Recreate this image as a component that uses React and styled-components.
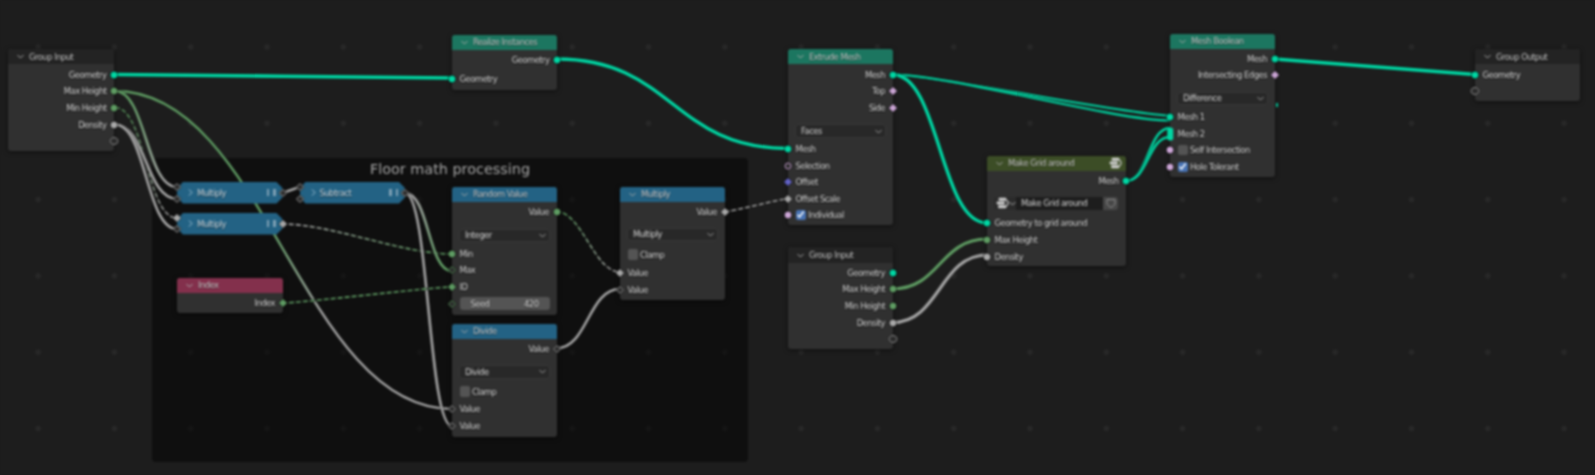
import styled, { createGlobalStyle } from "styled-components";

const GlobalStyle = createGlobalStyle`
  html, body {
    margin: 0;
    background: #1d1d1d;
  }
`;

const COLORS = {
  geo: "#00d6a3",
  int: "#5f9c63",
  float: "#a8a8a8",
  bool: "#cca6d6",
  vec: "#6363c7",
};

const WIRE_GREY = "#a4a4a4";

const Canvas = styled.div`
  position: relative;
  width: 1595px;
  height: 475px;
  overflow: hidden;
  font-family: "DejaVu Sans", sans-serif;
  font-size: 8.4px;
  letter-spacing: -0.5px;
  color: #d2d2d2;
  background-color: #1d1d1d;
  background-image: radial-gradient(circle at center, #282828 2.4px, transparent 3.2px);
  background-size: 76.3px 76.3px;
  background-position: 0 8.85px;
  filter: blur(0.8px);
`;

const Frame = styled.div`
  position: absolute;
  left: 152px;
  top: 158px;
  width: 596px;
  height: 304px;
  border-radius: 4px;
  background-color: #0f0f0f;
  background-image: radial-gradient(circle at center, #151515 2.4px, transparent 3.2px);
  background-size: 76.3px 76.3px;
  background-position: -152px -149.15px;
  text-align: center;
`;

const FrameTitle = styled.div`
  margin-top: 3px;
  font-size: 14.4px;
  letter-spacing: 0;
  line-height: 17px;
  color: #a6a6a6;
`;

const WireLayer = styled.svg`
  position: absolute;
  left: 0;
  top: 0;
`;

const Node = styled.div`
  position: absolute;
  left: ${(p) => p.$x}px;
  top: ${(p) => p.$y}px;
  width: ${(p) => p.$w || 104.5}px;
  height: ${(p) => p.$h}px;
  background: #303030;
  border-radius: 3px;
  box-shadow: 0 1px 5px rgba(0, 0, 0, 0.55);
`;

const Header = styled.div`
  display: flex;
  align-items: center;
  gap: 5px;
  height: ${(p) => p.$h || 14.5}px;
  padding: 0 4px 0 9px;
  background: ${(p) => p.$color};
  border-radius: 3px 3px 0 0;
  color: #c4c4c4;
  text-shadow: 0 1px 1px rgba(0, 0, 0, 0.5);
`;

const HeaderLabel = styled.span`
  flex: 1;
  white-space: nowrap;
`;

const Body = styled.div`
  display: flex;
  flex-direction: column;
  padding-top: ${(p) => p.$top ?? 3}px;
`;

const Row = styled.div`
  position: relative;
  display: flex;
  flex: none;
  align-items: center;
  justify-content: ${(p) => (p.$out ? "flex-end" : "flex-start")};
  height: ${(p) => p.$h || 16.6}px;
  padding: 0 7.5px;
  white-space: nowrap;
  text-shadow: 0 1px 1px rgba(0, 0, 0, 0.6);
`;

const Socket = styled.span`
  position: absolute;
  top: 50%;
  ${(p) => (p.$out ? "right" : "left")}: 0;
  width: 7px;
  height: 7px;
  box-sizing: border-box;
  transform: translate(${(p) => (p.$out ? "50%" : "-50%")}, -50%)
    ${(p) => (p.$kind === "diamond" || p.$kind === "hollow" ? "rotate(45deg) scale(0.85)" : "")};
  border-radius: ${(p) => (p.$kind === "diamond" || p.$kind === "hollow" ? "1px" : "50%")};
  background: ${(p) => (p.$kind === "hollow" || p.$kind === "ring" ? "#2a2a2a" : COLORS[p.$type])};
  border: ${(p) => (p.$kind === "hollow" || p.$kind === "ring" ? "1.3px" : "0.5px")} solid ${(p) => COLORS[p.$type]};
  box-shadow: 0 0 0 0.6px rgba(0, 0, 0, 0.65);
`;

const EmptySocket = styled(Socket)`
  width: 9px;
  height: 8px;
  border: 1px solid #8b8b8b;
  background: #2c2c2c;
`;

const MultiSocket = styled.span`
  position: absolute;
  top: 50%;
  left: 0;
  width: 5.5px;
  height: 13px;
  border-radius: 2.5px;
  background: ${COLORS.geo};
  transform: translate(-50%, -50%);
`;

const Dropdown = styled.div`
  display: flex;
  flex: none;
  align-items: center;
  justify-content: space-between;
  height: 13.5px;
  margin: ${(p) => p.$top ?? 8}px 7px ${(p) => p.$bottom ?? 3}px;
  padding: 0 3px 0 5px;
  background: #282828;
  border: 1px solid #373737;
  border-radius: 3px;
  box-sizing: border-box;
  color: #cecece;
`;

const CheckBox = styled.span`
  display: flex;
  flex: none;
  align-items: center;
  justify-content: center;
  width: 10.5px;
  height: 10.5px;
  margin-right: 2px;
  border-radius: 2px;
  background: ${(p) => (p.$on ? "#4772b3" : "#545454")};
`;

const NumberField = styled.div`
  display: flex;
  flex: 1;
  justify-content: space-between;
  height: 13px;
  padding: 0 11px;
  margin-right: -0.5px;
  align-items: center;
  background: #545454;
  border-radius: 3px;
`;

const TemplateRow = styled.div`
  display: flex;
  align-items: center;
  height: 12.5px;
  margin: 8px 8px 5.5px 7px;
`;

const TemplateIcon = styled.div`
  display: flex;
  flex: none;
  align-items: center;
  width: 22px;
  height: 100%;
  padding-left: 2px;
  box-sizing: border-box;
  background: #2b2b2b;
  border-radius: 3px 0 0 3px;
`;

const TemplateName = styled.div`
  display: flex;
  flex: 1;
  align-items: center;
  height: 100%;
  padding-left: 5px;
  background: #1d1d1d;
  color: #cecece;
`;

const TemplateShield = styled.div`
  display: flex;
  flex: none;
  align-items: center;
  justify-content: center;
  width: 15px;
  height: 100%;
  background: #474747;
  border-radius: 0 3px 3px 0;
`;

const Collapsed = styled.div`
  position: absolute;
  left: ${(p) => p.$x}px;
  top: ${(p) => p.$y}px;
  display: flex;
  align-items: center;
  gap: 3px;
  width: ${(p) => p.$w}px;
  height: 21.5px;
  padding: 0 7px 0 10px;
  box-sizing: border-box;
  color: #c9d6de;
  text-shadow: 0 1px 1px rgba(0, 0, 0, 0.6);
  isolation: isolate;
  &::before {
    content: "";
    position: absolute;
    inset: 0;
    z-index: -1;
    background: #236284;
    clip-path: polygon(
      6px 0,
      calc(100% - 6px) 0,
      100% 6px,
      100% calc(100% - 6px),
      calc(100% - 6px) 100%,
      6px 100%,
      0 calc(100% - 6px),
      0 6px
    );
  }
`;

const CollapsedLabel = styled.span`
  flex: 1;
`;

const Grip = styled.span`
  flex: none;
  width: 2.5px;
  height: 7px;
  margin-left: 1px;
  background: #7ea0b4;
`;

const SocketSpot = styled.div`
  position: absolute;
  left: ${(p) => (p.$out ? "100%" : "0")};
  top: ${(p) => p.$y}px;
  width: 0;
  height: 0;
`;

const Chevron = ({ open = true, color = "#a8a8a8" }) => (
  <svg width="7" height="7" viewBox="0 0 7 7" fill="none" stroke={color} strokeWidth="1">
    {open ? <path d="M0.5 2 L3.5 5 L6.5 2" /> : <path d="M2 0.5 L5 3.5 L2 6.5" />}
  </svg>
);

const Check = () => (
  <svg width="9" height="9" viewBox="0 0 9 9" fill="none" stroke="#fff" strokeWidth="1.4">
    <path d="M1.5 4.8 L3.6 7 L7.6 1.5" />
  </svg>
);

const GroupIcon = () => (
  <svg width="13" height="12" viewBox="0 0 13 12" fill="#cfcfcf">
    <rect x="2.5" y="0.7" width="8" height="3" rx="1.4" />
    <rect x="0.5" y="4.5" width="8.5" height="3" rx="1.4" />
    <rect x="2" y="8.3" width="8.5" height="3" rx="1.4" />
    <path d="M10 2.5 C13.4 3.2 13.4 8.8 10 9.5 L10 8.5 C11.8 7.6 11.8 4.4 10 3.5 Z" />
  </svg>
);

const Shield = () => (
  <svg width="10" height="10" viewBox="0 0 10 10" fill="none" stroke="#8a8a8a" strokeWidth="1">
    <path d="M1 1.5 H9 V5 C9 7.2 6.8 8.6 5 9.4 C3.2 8.6 1 7.2 1 5 Z" />
  </svg>
);

const Output = ({ label, type, kind }) => (
  <Row $out>
    {label}
    <Socket $out $type={type} $kind={kind} />
  </Row>
);

const Input = ({ label, type, kind, h }) => (
  <Row $h={h}>
    {label}
    <Socket $type={type} $kind={kind} />
  </Row>
);

const Toggle = ({ label, on, type, h }) => (
  <Row $h={h}>
    <CheckBox $on={on}>{on && <Check />}</CheckBox>
    {label}
    {type && <Socket $type={type} />}
  </Row>
);

const Select = ({ value, top, bottom }) => (
  <Dropdown $top={top} $bottom={bottom}>
    {value}
    <Chevron color="#9a9a9a" />
  </Dropdown>
);

const NodeHead = ({ title, color, icon, h }) => (
  <Header $color={color} $h={h}>
    <Chevron />
    <HeaderLabel>{title}</HeaderLabel>
    {icon}
  </Header>
);

const CollapsedMath = ({ x, y, w, title, sockets, out }) => (
  <Collapsed $x={x} $y={y} $w={w}>
    <Chevron open={false} color="#9fc0d4" />
    <CollapsedLabel>{title}</CollapsedLabel>
    <Grip />
    <Grip />
    {sockets.map((s) => (
      <SocketSpot key={s.y} $y={s.y}>
        <Socket $type="float" $kind={s.kind} />
      </SocketSpot>
    ))}
    <SocketSpot $out $y={10.8}>
      <Socket $out $type="float" $kind={out} />
    </SocketSpot>
  </Collapsed>
);

// wires: [x1, y1, x2, y2, from colour, to colour, width, dashed, handle length, gradient start, gradient end]
const WIRES = [
  [115, 91, 452, 409, COLORS.int, WIRE_GREY, 2.4, false, 150, 0.45, 0.65],
  [115, 91, 177, 187, COLORS.int, WIRE_GREY, 2.6],
  [115, 107.5, 177, 218, COLORS.int, WIRE_GREY, 1.4, true],
  [115, 124.5, 177, 199, WIRE_GREY, WIRE_GREY, 2.6],
  [115, 124.5, 177, 229, WIRE_GREY, WIRE_GREY, 2.6],
  [282, 193, 300, 187, WIRE_GREY, WIRE_GREY, 2.6, false, 2],
  [282, 224, 452, 254, WIRE_GREY, COLORS.int, 1.6, true, 50],
  [405, 193, 452, 271, WIRE_GREY, COLORS.int, 2.6, false, 24],
  [405, 193, 452, 426, WIRE_GREY, WIRE_GREY, 2.6, false, 24],
  [282, 303, 452, 287, COLORS.int, COLORS.int, 1.6, true, 20],
  [556, 211.5, 620, 272, COLORS.int, WIRE_GREY, 1.5, true, 26],
  [556, 348.5, 620, 289, WIRE_GREY, WIRE_GREY, 2.6],
  [724.5, 211.5, 788, 199, WIRE_GREY, WIRE_GREY, 1.5, true, 10],
  [115, 74.5, 452, 78, COLORS.geo, COLORS.geo, 3.6, false, 10],
  [557, 59, 788, 148.5, COLORS.geo, COLORS.geo, 3.4],
  [892.5, 74.5, 1170, 115.5, COLORS.geo, COLORS.geo, 2.2, false, 40],
  [892.5, 74.5, 1170, 120.5, COLORS.geo, COLORS.geo, 2.2, false, 55],
  [892.5, 74.5, 987, 223, COLORS.geo, COLORS.geo, 3.4],
  [1126, 181, 1170, 128, COLORS.geo, COLORS.geo, 2.4],
  [1126, 181, 1170, 137, COLORS.geo, COLORS.geo, 2.4],
  [1274.5, 59, 1475, 74.5, COLORS.geo, COLORS.geo, 3.6, false, 8],
  [892.5, 289, 987, 239, COLORS.int, COLORS.int, 3.2],
  [892.5, 322.5, 987, 255, WIRE_GREY, WIRE_GREY, 3.2],
];

const wirePath = ([x1, y1, x2, y2, , , , , handle]) => {
  const d = handle ?? Math.abs(x2 - x1) * 0.5;
  return `M${x1} ${y1} C${x1 + d} ${y1} ${x2 - d} ${y2} ${x2} ${y2}`;
};

const Wires = () => (
  <WireLayer width="1595" height="475" fill="none">
    <defs>
      {WIRES.map((w, i) => (
        <linearGradient key={i} id={`wire${i}`} gradientUnits="userSpaceOnUse" x1={w[0]} y1={w[1]} x2={w[2]} y2={w[3]}>
          <stop offset={w[9] ?? 0.1} stopColor={w[4]} />
          <stop offset={w[10] ?? 0.9} stopColor={w[5]} />
        </linearGradient>
      ))}
    </defs>
    {WIRES.map((w, i) => (
      <g key={i}>
        <path d={wirePath(w)} stroke="#111" strokeOpacity="0.7" strokeWidth={w[6] + 1} />
        <path d={wirePath(w)} stroke={`url(#wire${i})`} strokeWidth={w[6]} strokeDasharray={w[7] ? "5 2" : undefined} />
      </g>
    ))}
    <rect x="1276" y="103" width="2" height="4" fill={COLORS.geo} />
  </WireLayer>
);

const GroupInputRows = () => (
  <>
    <Output label="Geometry" type="geo" />
    <Output label="Max Height" type="int" />
    <Output label="Min Height" type="int" />
    <Output label="Density" type="float" />
    <Row $out>
      <EmptySocket $out $kind="ring" $type="float" />
    </Row>
  </>
);

const TEAL = "#1c7660";
const BLUE = "#236284";
const DARK = "#232323";

export default function App() {
  return (
    <Canvas>
      <GlobalStyle />
      <Frame>
        <FrameTitle>Floor math processing</FrameTitle>
      </Frame>
      <Wires />

      <Node $x={8} $y={49} $w={106} $h={102}>
        <NodeHead title="Group Input" color={DARK} h={15} />
        <Body $top={2.5}>
          <GroupInputRows />
        </Body>
      </Node>

      <CollapsedMath
        x={177}
        y={182}
        w={105.5}
        title="Multiply"
        sockets={[
          { y: 5, kind: "hollow" },
          { y: 17, kind: "hollow" },
        ]}
        out="hollow"
      />
      <CollapsedMath
        x={177}
        y={213}
        w={105.5}
        title="Multiply"
        sockets={[
          { y: 5, kind: "diamond" },
          { y: 16, kind: "hollow" },
        ]}
        out="diamond"
      />
      <CollapsedMath
        x={299.5}
        y={182}
        w={105.5}
        title="Subtract"
        sockets={[
          { y: 5, kind: "hollow" },
          { y: 17, kind: "hollow" },
        ]}
        out="hollow"
      />

      <Node $x={177} $y={278} $w={105.5} $h={35}>
        <NodeHead title="Index" color="#83304c" />
        <Body $top={2}>
          <Output label="Index" type="int" kind="diamond" />
        </Body>
      </Node>

      <Node $x={452} $y={35} $w={105} $h={54.5}>
        <NodeHead title="Realize Instances" color={TEAL} />
        <Body $top={2}>
          <Output label="Geometry" type="geo" />
          <Input label="Geometry" type="geo" h={21} />
        </Body>
      </Node>

      <Node $x={452} $y={187} $h={128}>
        <NodeHead title="Random Value" color={BLUE} />
        <Body $top={2}>
          <Output label="Value" type="int" />
          <Select value="Integer" top={8.5} bottom={3.5} />
          <Input label="Min" type="int" />
          <Input label="Max" type="int" kind="hollow" />
          <Input label="ID" type="int" kind="diamond" />
          <Row>
            <NumberField>
              <span>Seed</span>
              <span>420</span>
            </NumberField>
            <Socket $type="int" $kind="hollow" />
          </Row>
        </Body>
      </Node>

      <Node $x={452} $y={324} $h={113}>
        <NodeHead title="Divide" color={BLUE} />
        <Body $top={2}>
          <Output label="Value" type="float" kind="hollow" />
          <Select value="Divide" top={8} bottom={4} />
          <Toggle label="Clamp" h={18} />
          <Input label="Value" type="float" kind="hollow" h={17} />
          <Input label="Value" type="float" kind="hollow" h={17} />
        </Body>
      </Node>

      <Node $x={620} $y={187} $h={113}>
        <NodeHead title="Multiply" color={BLUE} />
        <Body $top={2}>
          <Output label="Value" type="float" kind="diamond" />
          <Select value="Multiply" top={7.5} bottom={4} />
          <Toggle label="Clamp" h={19} />
          <Input label="Value" type="float" kind="diamond" h={17} />
          <Input label="Value" type="float" kind="hollow" h={17} />
        </Body>
      </Node>

      <Node $x={788} $y={49} $h={176}>
        <NodeHead title="Extrude Mesh" color={TEAL} h={15} />
        <Body $top={2.5}>
          <Output label="Mesh" type="geo" />
          <Output label="Top" type="bool" kind="diamond" />
          <Output label="Side" type="bool" kind="diamond" />
          <Select value="Faces" />
          <Input label="Mesh" type="geo" />
          <Input label="Selection" type="bool" kind="ring" />
          <Input label="Offset" type="vec" kind="diamond" />
          <Input label="Offset Scale" type="float" kind="diamond" />
          <Toggle label="Individual" on type="bool" h={15.5} />
        </Body>
      </Node>

      <Node $x={788} $y={247} $h={102}>
        <NodeHead title="Group Input" color={DARK} h={16} />
        <Body $top={1.5}>
          <GroupInputRows />
        </Body>
      </Node>

      <Node $x={987} $y={156} $w={139} $h={110}>
        <NodeHead title="Make Grid around" color="#3c4d26" icon={<GroupIcon />} />
        <Body $top={2}>
          <Output label="Mesh" type="geo" />
          <TemplateRow>
            <TemplateIcon>
              <GroupIcon />
              <Chevron />
            </TemplateIcon>
            <TemplateName>Make Grid around</TemplateName>
            <TemplateShield>
              <Shield />
            </TemplateShield>
          </TemplateRow>
          <Input label="Geometry to grid around" type="geo" />
          <Input label="Max Height" type="int" />
          <Input label="Density" type="float" />
        </Body>
      </Node>

      <Node $x={1170} $y={34} $h={143}>
        <NodeHead title="Mesh Boolean" color={TEAL} />
        <Body $top={2}>
          <Output label="Mesh" type="geo" />
          <Output label="Intersecting Edges" type="bool" kind="diamond" />
          <Select value="Difference" bottom={3.5} />
          <Input label="Mesh 1" type="geo" />
          <Row>
            Mesh 2
            <MultiSocket />
          </Row>
          <Toggle label="Self Intersection" type="bool" />
          <Toggle label="Hole Tolerant" on type="bool" />
        </Body>
      </Node>

      <Node $x={1475} $y={49} $h={52}>
        <NodeHead title="Group Output" color={DARK} h={15} />
        <Body $top={2.5}>
          <Input label="Geometry" type="geo" />
          <Row>
            <EmptySocket $kind="ring" $type="float" />
          </Row>
        </Body>
      </Node>
    </Canvas>
  );
}
